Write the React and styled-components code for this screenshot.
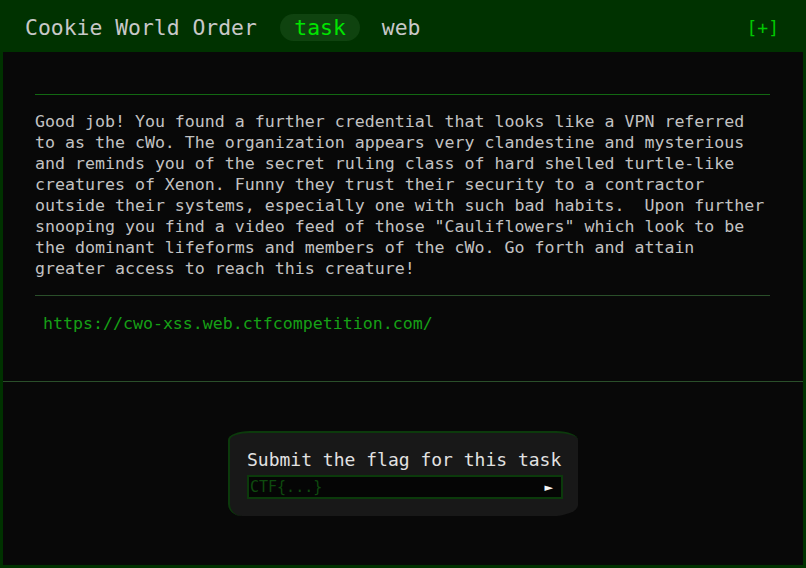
import React from "react"
import styled, { createGlobalStyle } from "styled-components"

const GlobalStyle = createGlobalStyle`
  html, body {
    margin: 0;
    padding: 0;
    background: #003200;
  }
  #root {
    height: 568px;
  }
`

const mono = `"DejaVu Sans Mono", "Liberation Mono", monospace`

const StyledPage = styled.div`
  height: 568px;
  display: flex;
  flex-direction: column;
  font-family: ${mono};
  box-sizing: border-box;
`

const StyledHeader = styled.header`
  height: 52px;
  flex-shrink: 0;
  display: flex;
  align-items: center;
  padding: 2px 27px 0 25px;
  box-sizing: border-box;
  background: #003200;
`

const StyledTitle = styled.span`
  font-size: 21.4px;
  color: #c8c8c8;
  margin-right: 23px;
`

const StyledPill = styled.span`
  display: inline-flex;
  align-items: center;
  height: 27px;
  padding: 0 14.5px;
  border-radius: 14px;
  font-size: 21.4px;
  color: ${(props) => (props.active ? "#00e600" : "#c8c8c8")};
  background: ${(props) => (props.active ? "#0f430f" : "transparent")};
  margin-right: 7px;
`

const StyledExpand = styled.span`
  margin-left: auto;
  font-size: 18px;
  color: #00c800;
`

const StyledMain = styled.main`
  flex: 1;
  margin: 0 3px 3px 3px;
  background: #080808;
  display: flex;
  flex-direction: column;
`

const StyledSection = styled.section`
  padding: 42px 33px 0 32px;
`

const StyledRule = styled.hr`
  margin: 0;
  border: none;
  height: 1px;
  background: ${(props) => props.color ?? "#126812"};
`

const StyledText = styled.p`
  margin: 16px 0 16px 0;
  font-size: 16.6px;
  line-height: 21px;
  color: #c2c2c2;
  white-space: pre-wrap;
`

const StyledLink = styled.a`
  display: block;
  margin: 17px 0 47px 8px;
  font-size: 16.6px;
  line-height: 21px;
  color: #16a016;
  text-decoration: none;
`

const StyledSubmit = styled.form`
  align-self: center;
  width: 350px;
  height: 85px;
  margin-top: 49px;
  box-sizing: border-box;
  background: #181818;
  border-top: 2px solid #0c3a0c;
  border-left: 2px solid #0c3a0c;
  border-radius: 22px 22px 26px 14px / 9px 9px 11px 12px;
  padding: 16px 16px 0 17px;
  display: flex;
  flex-direction: column;
`

const StyledSubmitLabel = styled.label`
  font-size: 18px;
  line-height: 22px;
  color: #e2e2e2;
  white-space: nowrap;
`

const StyledInputRow = styled.div`
  margin-top: 4px;
  width: 316px;
  height: 24px;
  box-sizing: border-box;
  border: 2px solid #0b3a0b;
  background: #050505;
  display: flex;
  align-items: center;
  padding: 0 8px 0 1px;
`

const StyledInput = styled.input`
  flex: 1;
  min-width: 0;
  border: none;
  outline: none;
  background: transparent;
  font-family: ${mono};
  font-size: 15px;
  color: #0e4a0e;
  padding: 0;
  &::placeholder {
    color: #0e4a0e;
  }
`

const StyledArrow = styled.button`
  border: none;
  background: transparent;
  color: #f4f4f4;
  font-size: 11px;
  padding: 0;
  font-family: "DejaVu Sans", sans-serif;
`

const paragraph = [
  "Good job! You found a further credential that looks like a VPN referred",
  "to as the cWo. The organization appears very clandestine and mysterious",
  "and reminds you of the secret ruling class of hard shelled turtle-like",
  "creatures of Xenon. Funny they trust their security to a contractor",
  "outside their systems, especially one with such bad habits.  Upon further",
  'snooping you find a video feed of those "Cauliflowers" which look to be',
  "the dominant lifeforms and members of the cWo. Go forth and attain",
  "greater access to reach this creature!",
]

const App = () => {
  return (
    <>
      <GlobalStyle />
      <StyledPage>
        <StyledHeader>
          <StyledTitle>Cookie World Order</StyledTitle>
          <StyledPill active>task</StyledPill>
          <StyledPill>web</StyledPill>
          <StyledExpand>[+]</StyledExpand>
        </StyledHeader>

        <StyledMain>
          <StyledSection>
            <StyledRule />
            <StyledText>{paragraph.join("\n")}</StyledText>
            <StyledRule color="#2a4f2a" />
            <StyledLink href="#">https://cwo-xss.web.ctfcompetition.com/</StyledLink>
          </StyledSection>
          <StyledRule color="#2a4f2a" />

          <StyledSubmit onSubmit={(e) => e.preventDefault()}>
            <StyledSubmitLabel>Submit the flag for this task</StyledSubmitLabel>
            <StyledInputRow>
              <StyledInput placeholder="CTF{...}" />
              <StyledArrow type="submit">►</StyledArrow>
            </StyledInputRow>
          </StyledSubmit>
        </StyledMain>
      </StyledPage>
    </>
  )
}

export default App
